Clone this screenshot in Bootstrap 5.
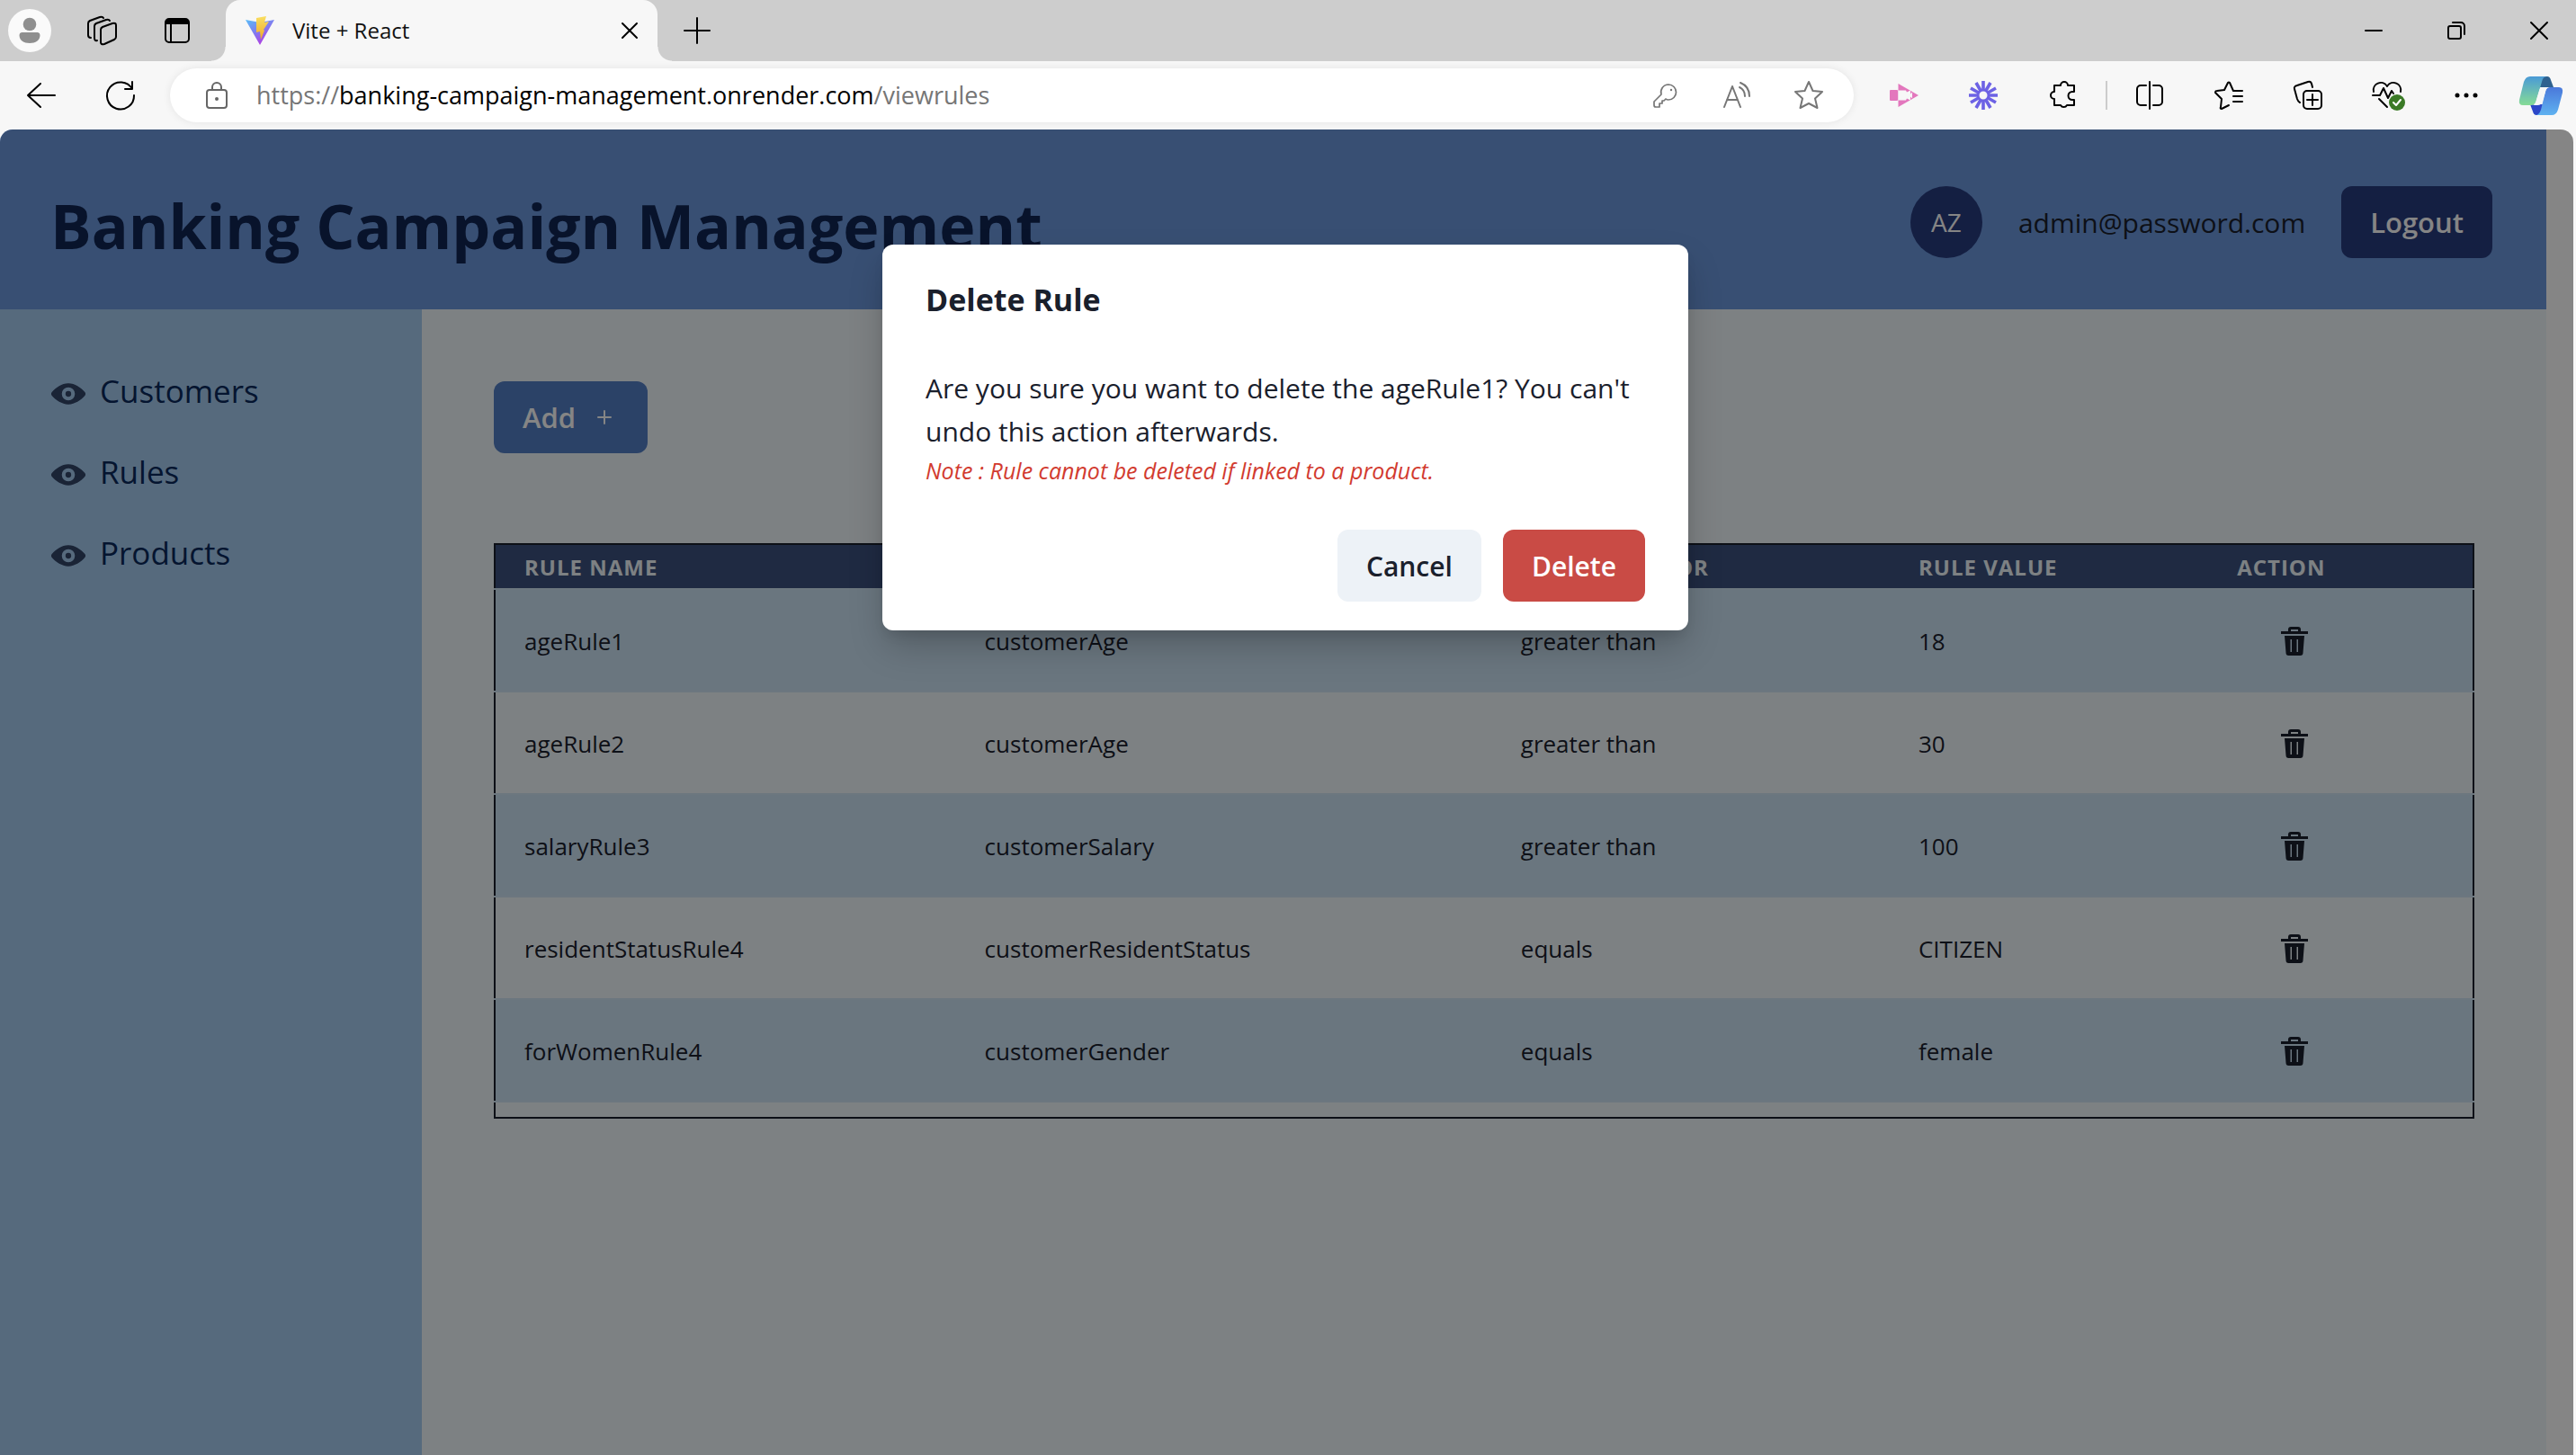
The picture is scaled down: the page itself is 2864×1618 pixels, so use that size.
<!DOCTYPE html>
<html lang="en">
<head>
<meta charset="utf-8">
<meta name="viewport" content="width=device-width, initial-scale=1">
<title>Vite + React</title>
<link href="https://cdn.jsdelivr.net/npm/bootstrap@5.3.0/dist/css/bootstrap.min.css" rel="stylesheet">
<script src="https://cdn.jsdelivr.net/npm/bootstrap@5.3.0/dist/js/bootstrap.bundle.min.js" defer></script>
<style>
  body { font-family: "Open Sans", "Noto Sans", sans-serif; color: #1a202c; background: #f7f7f7; }
  svg { display: block; flex: none; overflow: visible; }
  .line { fill: none; stroke: currentColor; stroke-width: 2; stroke-linecap: round; stroke-linejoin: round; }

  /* browser frame */
  .tab-strip { height: 68px; background: #cdcdcd; }
  .icon-button { border: 0; background: none; padding: 0; color: #000; display: flex; align-items: center; justify-content: center; flex: none; height: 60px; width: 88px; }
  .icon-button.in-pill { width: 80px; color: #767676; }
  .icon-button.site-info { width: 88px; color: #666; }
  .icon-button.copilot { width: 78px; }
  .icon-button.window-control { width: 82px; height: 68px; }
  .window-controls { gap: 10px; }
  .icon-button.profile { width: 66px; }
  .icon-button.workspaces { width: 94px; }
  .icon-button.tab-actions { width: 74px; }
  .browser-tab { position: relative; width: 480px; height: 68px; margin-left: 17px; padding: 0 14px 0 22px; background: #f7f7f7; border-radius: 16px 16px 0 0; }
  .browser-tab::before, .browser-tab::after { content: ""; position: absolute; bottom: 0; width: 16px; height: 16px; }
  .browser-tab::before { left: -16px; background: radial-gradient(circle at 0 0, transparent 15px, #f7f7f7 16px); }
  .browser-tab::after { right: -16px; background: radial-gradient(circle at 100% 0, transparent 15px, #f7f7f7 16px); }
  .tab-title { font-size: 24px; color: #111; margin-left: 20px; }
  .icon-button.tab-close { width: 34px; }
  .tool-strip { height: 76px; padding-left: 2px; }
  .address-pill { height: 60px; margin: 0 12px 0 11px; padding: 0 10px 0 8px; background: #fff; border-radius: 30px; box-shadow: 0 0 10px rgba(0,0,0,.08); }
  .address-text { font-size: 27px; line-height: 40px; color: #767676; white-space: nowrap; outline: 0; }
  .address-text b { font-weight: 400; color: #000; }
  .tool-divider { width: 2px; height: 32px; margin: 0 3px 0 4px; background: #ccc; }

  /* page */
  .page-view { position: relative; min-height: 0; margin-right: 3px; border-radius: 14px 14px 0 0; overflow: hidden; }
  .page-scroll { width: 30px; background: #fff; }
  .app-header { min-height: 200px; padding: 6px 60px 0 56px; background: #6c98dd; }
  .app-title { font-size: 68px; line-height: 88px; font-weight: 700; color: #112553; margin: 8px 0 0; }
  .user-info { gap: 40px; }
  .user-badge { width: 80px; height: 80px; border-radius: 50%; background: #283c7f; color: #fff; font-size: 28px; }
  .user-mail { font-size: 30px; color: #1a202c; }
  .app-btn { height: 80px; padding: 0 32px; border: 0; border-radius: 12px; font-size: 31px; font-weight: 600; color: #fff; }
  .app-btn.logout { background: #283c7f; }
  .app-btn.add { background: #537fc6; gap: 24px; }
  .app-btn.add svg { margin-right: 8px; }
  .app-btn.cancel { background: #edf2f7; color: #1a202c; font-size: 30px; }
  .app-btn.delete { background: #c94b45; font-size: 30px; }
  .side-menu { width: 469px; padding: 64px 57px; gap: 36px; background: #a5ccf0; }
  .side-menu a { font-size: 35px; line-height: 54px; color: #0b2a5c; text-decoration: none; gap: 16px; }
  .side-menu svg { color: #324568; margin-top: 6px; }
  .app-main { background: #f0f8fc; padding: 80px; }

  .rules { width: 100%; margin: 100px 0 0; table-layout: fixed; border-collapse: collapse; border: 2px solid #1a202c; }
  .rules th { height: 50px; padding: 2px 32px 0; background: #3c517f; color: #f0f8fc; font-size: 24px; line-height: 32px; font-weight: 700; letter-spacing: 1px; text-transform: uppercase; border-bottom: 2px solid #cfe4f3; }
  .rules tbody td { height: 114px; padding: 2px 32px 0; font-size: 26px; line-height: 40px; border-bottom: 2px solid #cfe4f3; }
  .rules tbody tr:nth-child(odd) td { background: #cce3f4; }
  .rules tfoot td { height: 18px; padding: 0; }
  .col-name { width: 23.3%; }
  .col-field { width: 27.1%; }
  .col-operator { width: 20.1%; }
  .col-value { width: 16.1%; }
  .trash { width: 128px; height: 80px; color: #1a202c; }

  /* dialog */
  .dim { position: absolute; inset: 0; background: rgba(0,0,0,.48); padding: 128px 3px 0 0; }
  .dialog-box { width: 896px; height: max-content; background: #fff; border: 0; border-radius: 12px; margin: 0 auto; box-shadow: 0 20px 40px -4px rgba(0,0,0,.22), 0 8px 14px -4px rgba(0,0,0,.1); }
  .dialog-box .modal-header { border: 0; padding: 34px 48px 32px; }
  .dialog-box h2 { font-size: 34px; line-height: 54px; font-weight: 700; margin: 0; }
  .dialog-box .modal-body { padding: 16px 48px 14px; font-size: 30px; line-height: 48px; }
  .dialog-note { font-size: 25px; line-height: 39px; font-style: italic; color: #d23b2f; margin: 0; }
  .dialog-box .modal-footer { border: 0; padding: 32px 48px; gap: 24px; }
  .dialog-box .modal-footer > * { margin: 0; }
</style>
</head>
<body class="vh-100 d-flex flex-column overflow-hidden">

<header>
  <div class="tab-strip d-flex align-items-center">
    <button class="icon-button profile" aria-label="Profile"><svg width="48" height="48"><circle cx="24" cy="24" r="24" fill="#fafafa"/><circle cx="24" cy="17" r="7.3" fill="#8f8f8f"/><path d="M15 26h18a3 3 0 0 1 2.500 3c0 6-5 9-11.500 9s-11.500-3-11.500-9a3 3 0 0 1 2.500-3z" fill="#8f8f8f"/></svg></button>
    <button class="icon-button workspaces" aria-label="Workspaces"><svg class="line" width="32" height="32"><path d="M17 12l11-4q4-1 4 2v13q0 2-2 3l-11 5q-4 1-4-2V15q0-2 2-3z"/><path d="M11 27q-3 1-3-3V11q0-2 2-3l11-4q3-1 4 1"/><path d="M4 24q-3 0-3-3V8q0-2 2-3l11-4q3-1 4 1"/></svg></button>
    <button class="icon-button tab-actions" aria-label="Tab actions"><svg width="28" height="28"><path d="M1 7V5a4 4 0 0 1 4-4h18a4 4 0 0 1 4 4v2z"/><rect class="line" x="1" y="1" width="26" height="26" rx="4"/><path class="line" d="M7 7v20"/></svg></button>
    <div class="browser-tab d-flex align-items-center">
      <svg width="32" height="32" viewBox="0 0 32 32">
        <defs><linearGradient id="v" x1="0" y1="0" x2=".6" y2="1"><stop offset="0" stop-color="#59bdf8"/><stop offset=".5" stop-color="#7f7ef0"/><stop offset="1" stop-color="#b23be0"/></linearGradient><linearGradient id="z" x1="0" y1="0" x2="0" y2="1"><stop offset="0" stop-color="#f9df62"/><stop offset="1" stop-color="#efa82c"/></linearGradient></defs>
        <path d="M0 4l16 3 16-3-16 28z" fill="url(#v)"/><path d="M12 2l11-2-2 7 5-1-6 9 1 1-4 10-1-9-4 1z" fill="url(#z)"/>
      </svg>
      <span class="tab-title">Vite + React</span>
      <button class="icon-button tab-close ms-auto" aria-label="Close tab"><svg class="line" width="16" height="16"><path d="M0 0l16 16M16 0L0 16"/></svg></button>
    </div>
    <button class="icon-button" aria-label="New tab"><svg class="line" width="28" height="28"><path d="M0 14h28M14 0v28"/></svg></button>
    <div class="window-controls d-flex ms-auto">
      <button class="icon-button window-control" aria-label="Minimize"><svg class="line" width="20" height="20"><path d="M1 10h18"/></svg></button>
      <button class="icon-button window-control" aria-label="Restore"><svg class="line" width="20" height="20"><rect x="1" y="5" width="14" height="14" rx="2"/><path d="M6 1h9a4 4 0 0 1 4 4v9"/></svg></button>
      <button class="icon-button window-control" aria-label="Close"><svg class="line" width="20" height="20"><path d="M1 1l18 18M19 1L1 19"/></svg></button>
    </div>
  </div>

  <div class="tool-strip d-flex align-items-center">
    <button class="icon-button" aria-label="Back"><svg class="line" width="32" height="28"><path d="M31 14H1M15 1L1 14l14 13"/></svg></button>
    <button class="icon-button" aria-label="Reload"><svg class="line" width="32" height="32"><path d="M29 9A15 15 0 1 0 31 16M29 1v8h-8"/></svg></button>
    <div class="address-pill d-flex align-items-center flex-fill">
      <button class="icon-button site-info" aria-label="Site information"><svg class="line" width="24" height="30"><rect x="1" y="9" width="22" height="20" rx="3"/><path d="M7 9V6a5 5 0 0 1 10 0v3"/><circle cx="12" cy="19" r="1"/></svg></button>
      <div class="address-text flex-fill" role="textbox" aria-label="Address">https://<b>banking-campaign-management.onrender.com</b>/viewrules</div>
      <button class="icon-button in-pill" aria-label="Passwords"><svg class="line" width="27" height="27"><path d="M17 1a8.500 8.500 0 0 1 0 17q-2 0-3-1l-2 2h-2v3H7v4H3q-2 0-2-2v-4l8-8A8.500 8.500 0 0 1 17 1z" stroke-width="1.700"/><circle cx="20" cy="7" r="1.200" fill="currentColor" stroke="none"/></svg></button>
      <button class="icon-button in-pill" aria-label="Read aloud"><svg class="line" width="30" height="28"><path d="M1 27L10 4l9 23M4 19h12M18 5q6 3 6 10M19 0q10 4 10 15"/></svg></button>
      <button class="icon-button in-pill" aria-label="Add to favorites"><svg class="line" width="32" height="32"><path d="M16 1l4.500 10 10.500 1-8 7.500 2.500 10.500L16 25l-9.500 5L9 19.500 1 12l10.500-1z"/></svg></button>
    </div>
    <button class="icon-button" aria-label="Screen recorder"><svg width="32" height="26"><g fill="#e377bd"><rect y="7" width="9" height="12" rx="1"/><path d="M9.500 0L32 13 9.500 26z"/></g><path d="M9.500 7.500H18l1 2 4-2v4l2-2v7l-2-2v4l-4-2-1 2H9.500z" fill="#f7f7f7"/></svg></button>
    <button class="icon-button" aria-label="Loom"><svg width="32" height="32"><g stroke="#6d62e4" stroke-width="3.600"><path d="M16 0v11M16 21v11M0 16h11M21 16h11M8 2l5.500 9.500M18.500 20.500L24 30M2 8l9.500 5.500M20.500 18.500L30 24M2 24l9.500-5.500M20.500 13.500L30 8M8 30l5.500-9.500M18.500 11.500L24 2"/></g><circle cx="16" cy="16" r="5.500" fill="#f7f7f7" stroke="#6d62e4" stroke-width="2"/></svg></button>
    <button class="icon-button" aria-label="Extensions"><svg class="line" width="28" height="32"><path d="M5 5h7a4 4 0 0 1 8 0h7v7h-2a4.500 4.500 0 0 0 0 9h2v6h-8a4 4 0 0 1-7 0H5v-7a4 4 0 0 1 0-8z"/></svg></button>
    <span class="tool-divider"></span>
    <button class="icon-button" aria-label="Split screen"><svg class="line" width="30" height="32"><path d="M15 1v30M11 5H5a4 4 0 0 0-4 4v14a4 4 0 0 0 4 4h6M19 5h6a4 4 0 0 1 4 4v14a4 4 0 0 1-4 4h-6"/></svg></button>
    <button class="icon-button" aria-label="Favorites"><svg class="line" width="32" height="32"><path d="M16 27l-8 4q-2 0-1-2l1-9-7-7q0-2 2-2l8-1 4-8q1-1 2 0l4 9h10M21 17h10M21 23h10"/></svg></button>
    <button class="icon-button" aria-label="Collections"><svg class="line" width="32" height="32"><rect x="11" y="11" width="20" height="20" rx="4"/><path d="M21 15v12M15 21h12M7 24q-2-1-3-4L1 9q-1-3 3-4l12-4q3-1 4 2l1 4"/></svg></button>
    <button class="icon-button" aria-label="Browser essentials"><svg class="line" width="32" height="32"><path d="M1 12C-1 3 11-2 16 6c5-8 17-3 15 6M0 16h8l4-8 5 11 4-8 2 3M7 20l9 9"/><circle cx="27" cy="24" r="9" fill="#3b7a26" stroke="none"/><path d="M23 24l3 3 5-6" stroke="#fff"/></svg></button>
    <button class="icon-button" aria-label="Settings and more"><svg width="26" height="6"><circle cx="3" cy="3" r="2.500"/><circle cx="13" cy="3" r="2.500"/><circle cx="23" cy="3" r="2.500"/></svg></button>
    <button class="icon-button copilot" aria-label="Copilot"><svg width="48" height="43" viewBox="0 0 48 43">
      <defs><linearGradient id="c1" x1="0" y1="0" x2="0" y2="1"><stop offset="0" stop-color="#4a9ad6"/><stop offset="1" stop-color="#86dc96"/></linearGradient><linearGradient id="c2" x1="0" y1="0" x2="0" y2="1"><stop offset="0" stop-color="#4a78da"/><stop offset="1" stop-color="#5fb2f0"/></linearGradient></defs>
      <path d="M24 0h7q3 0 4 4l3 8H23z" fill="#2f618f"/><path d="M24 43h-5q-3 0-4-4l-3-8h14z" fill="#2c47c8"/>
      <path d="M12 0h19q-5 0-6 6l-6 20q-1 6-6 6H4q-5 0-4-6L5 6q2-6 7-6z" fill="url(#c1)"/><path d="M36 43H18q4 0 6-6l5-20q1-5 5-5h10q5 0 4 6l-5 19q-2 6-7 6z" fill="url(#c2)"/><path d="M26 12h8q-4 0-5 5l-3 10q-1 5-6 5h-5q3-1 4-6l3-10q1-4 4-4z" fill="#f7f7f7"/>
    </svg></button>
  </div>
</header>

<div class="page-view d-flex flex-fill">
  <div class="d-flex flex-column flex-fill">
    <header class="app-header d-flex align-items-center justify-content-between">
      <h1 class="app-title">Banking Campaign Management</h1>
      <div class="user-info d-flex align-items-center">
        <span class="user-badge d-flex align-items-center justify-content-center">AZ</span>
        <span class="user-mail">admin@password.com</span>
        <button class="btn app-btn logout">Logout</button>
      </div>
    </header>
    <div class="d-flex flex-fill">
      <nav class="side-menu d-flex flex-column flex-shrink-0">
        <a href="#customers" class="d-flex align-items-center"><svg width="38" height="38" viewBox="0 0 24 24"><use href="#eye"/></svg>Customers</a>
        <a href="#rules" class="d-flex align-items-center"><svg width="38" height="38" viewBox="0 0 24 24"><use href="#eye"/></svg>Rules</a>
        <a href="#products" class="d-flex align-items-center"><svg width="38" height="38" viewBox="0 0 24 24"><use href="#eye"/></svg>Products</a>
      </nav>
      <main class="app-main flex-fill">
        <button class="btn app-btn add d-flex align-items-center">Add<svg class="line" width="16" height="16"><path d="M1 8h14M8 1v14"/></svg></button>
        <table class="rules">
          <colgroup><col class="col-name"><col class="col-field"><col class="col-operator"><col class="col-value"><col></colgroup>
          <thead><tr><th scope="col">Rule Name</th><th scope="col">Rule Field</th><th scope="col">Rule Operator</th><th scope="col">Rule Value</th><th scope="col">Action</th></tr></thead>
          <tbody>
            <tr><td>ageRule1</td><td>customerAge</td><td>greater than</td><td>18</td><td><button class="btn p-0 border-0 trash d-flex align-items-center justify-content-center" aria-label="Delete ageRule1"><svg width="30" height="32"><use href="#bin"/></svg></button></td></tr>
            <tr><td>ageRule2</td><td>customerAge</td><td>greater than</td><td>30</td><td><button class="btn p-0 border-0 trash d-flex align-items-center justify-content-center" aria-label="Delete ageRule2"><svg width="30" height="32"><use href="#bin"/></svg></button></td></tr>
            <tr><td>salaryRule3</td><td>customerSalary</td><td>greater than</td><td>100</td><td><button class="btn p-0 border-0 trash d-flex align-items-center justify-content-center" aria-label="Delete salaryRule3"><svg width="30" height="32"><use href="#bin"/></svg></button></td></tr>
            <tr><td>residentStatusRule4</td><td>customerResidentStatus</td><td>equals</td><td>CITIZEN</td><td><button class="btn p-0 border-0 trash d-flex align-items-center justify-content-center" aria-label="Delete residentStatusRule4"><svg width="30" height="32"><use href="#bin"/></svg></button></td></tr>
            <tr><td>forWomenRule4</td><td>customerGender</td><td>equals</td><td>female</td><td><button class="btn p-0 border-0 trash d-flex align-items-center justify-content-center" aria-label="Delete forWomenRule4"><svg width="30" height="32"><use href="#bin"/></svg></button></td></tr>
          </tbody>
          <tfoot><tr><td colspan="5"></td></tr></tfoot>
        </table>
      </main>
    </div>
  </div>
  <div class="page-scroll flex-shrink-0"></div>

  <div class="dim">
    <div class="modal-content dialog-box" role="dialog" aria-labelledby="dialog-title">
      <div class="modal-header"><h2 id="dialog-title">Delete Rule</h2></div>
      <div class="modal-body">
        Are you sure you want to delete the ageRule1? You can't undo this action afterwards.
        <p class="dialog-note">Note : Rule cannot be deleted if linked to a product.</p>
      </div>
      <div class="modal-footer">
        <button class="btn app-btn cancel">Cancel</button>
        <button class="btn app-btn delete">Delete</button>
      </div>
    </div>
  </div>
</div>

<svg width="0" height="0" class="position-absolute" aria-hidden="true">
  <symbol id="eye" viewBox="0 0 24 24"><g fill="currentColor"><path d="M23.432,10.524C20.787,7.614,16.4,4.538,12,4.6,7.6,4.537,3.213,7.615.568,10.524a2.211,2.211,0,0,0,0,2.948C3.182,16.351,7.507,19.4,11.839,19.4h.308c4.347,0,8.671-3.049,11.288-5.929A2.21,2.21,0,0,0,23.432,10.524ZM7.4,12A4.6,4.6,0,1,1,12,16.6,4.6,4.6,0,0,1,7.4,12Z"/><circle cx="12" cy="12" r="2"/></g></symbol>
  <symbol id="bin" viewBox="0 0 30 32"><path fill="currentColor" fill-rule="evenodd" d="M0 5h8V3q0-3 3-3h8q3 0 3 3v2h8v3H0zM11 5h8V3h-8zM4 10h22l-1.500 19q0 3-3 3h-13q-3 0-3-3zM10.500 14v14h1.500V14zM17.500 14v14H19V14z"/></symbol>
</svg>
</body>
</html>
